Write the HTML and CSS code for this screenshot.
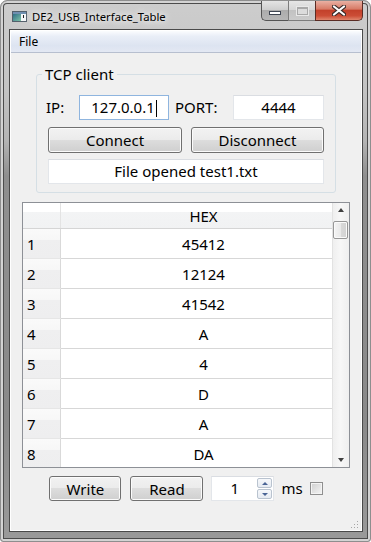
FILE: index.html
```html
<!DOCTYPE html>
<html lang="en">
<head>
  <meta charset="UTF-8" />
  <title>DE2_USB_Interface_Table</title>
  <link rel="stylesheet" href="styles.css">
</head>
<body>
  <div class="window">
    <header class="titlebar">
      <svg class="app-icon" width="15" height="11" viewBox="0 0 15 11">
        <defs>
          <linearGradient id="ig" x1="0" y1="0" x2="1" y2="1">
            <stop offset="0" stop-color="#2f6f86" />
            <stop offset="1" stop-color="#7fc3a8" />
          </linearGradient>
        </defs>
        <rect x="0.5" y="0.5" width="14" height="10" fill="#f4f6f8" stroke="#54606c" />
        <rect x="1" y="1" width="13" height="2" fill="#6f8fb0" />
        <rect x="1" y="3" width="8" height="7" fill="url(#ig)" />
        <rect x="11" y="4" width="1" height="3" fill="#222" />
      </svg>
      <span class="title">DE2_USB_Interface_Table</span>
      <div class="caption-btns">
        <span class="cap cap-min"><i></i></span>
        <span class="cap cap-max"><i></i></span>
        <span class="cap cap-close">
          <svg width="14" height="11" viewBox="0 0 14 11">
            <path d="M2 1.5 L12 9.5 M12 1.5 L2 9.5" stroke="#3a2a28" stroke-width="4.2" stroke-linecap="round" />
            <path d="M2 1.5 L12 9.5 M12 1.5 L2 9.5" stroke="#fff" stroke-width="2.2" stroke-linecap="round" />
          </svg>
        </span>
      </div>
    </header>

    <div class="client">
      <div class="menubar"><span>File</span></div>

      <main class="main">
        <fieldset class="group">
          <legend>TCP client</legend>
          <div class="row">
            <label class="lbl lbl-ip">IP:</label>
            <div class="field field-ip">127.0.0.1<span class="caret"></span></div>
            <label class="lbl lbl-port">PORT:</label>
            <div class="field field-port">4444</div>
          </div>
          <div class="row btn-row">
            <button class="btn btn-connect">Connect</button>
            <button class="btn btn-disconnect">Disconnect</button>
          </div>
          <div class="field status">File opened test1.txt</div>
        </fieldset>

        <div class="table">
          <div class="grid">
            <div class="hrow">
              <div class="corner"></div>
              <div class="hcell">HEX</div>
            </div>
            <div class="trow"><div class="vhead">1</div><div class="cell">45412</div></div>
            <div class="trow"><div class="vhead">2</div><div class="cell">12124</div></div>
            <div class="trow"><div class="vhead">3</div><div class="cell">41542</div></div>
            <div class="trow"><div class="vhead">4</div><div class="cell">A</div></div>
            <div class="trow"><div class="vhead">5</div><div class="cell">4</div></div>
            <div class="trow"><div class="vhead">6</div><div class="cell">D</div></div>
            <div class="trow"><div class="vhead">7</div><div class="cell">A</div></div>
            <div class="trow"><div class="vhead">8</div><div class="cell">DA</div></div>
          </div>
          <div class="vscroll">
            <div class="sb-btn"><span class="arrow-up"></span></div>
            <div class="sb-thumb"></div>
            <div class="sb-track"></div>
            <div class="sb-btn"><span class="arrow-down"></span></div>
          </div>
        </div>

        <div class="controls">
          <button class="btn btn-write">Write</button>
          <button class="btn btn-read">Read</button>
          <div class="spin">
            <span class="spin-value">1</span>
            <div class="spin-btns">
              <span class="spin-up"><i></i></span>
              <span class="spin-down"><i></i></span>
            </div>
          </div>
          <span class="ms">ms</span>
          <span class="check"></span>
        </div>

        <div class="grip">
          <svg width="9" height="9" viewBox="0 0 9 9">
            <g fill="#a7a7a7">
              <rect x="7" y="1" width="1" height="1" />
              <rect x="4" y="4" width="1" height="1" />
              <rect x="7" y="4" width="1" height="1" />
              <rect x="1" y="7" width="1" height="1" />
              <rect x="4" y="7" width="1" height="1" />
              <rect x="7" y="7" width="1" height="1" />
            </g>
          </svg>
        </div>
      </main>
    </div>
  </div>
</body>
</html>
```

FILE: styles.css
```css
* {
  box-sizing: border-box;
}
body {
  margin: 0;
  background: #fff;
  color: #000;
  font-family: "Segoe UI", "Noto Sans", sans-serif;
  font-size: 15px;
}

/* window frame */
.window {
  width: 371px;
  height: 542px;
  display: flex;
  flex-direction: column;
  padding: 0 7px 9px 8px;
  border: 1px solid #8e8e8e;
  border-radius: 7px 7px 3px 3px;
  background: linear-gradient(180deg, #cdcdcd 0, #c3c3c3 90px, #b4b4b4 140px, #8f8f8f 175px, #8a8a8a 420px, #9a9a9a 100%);
  box-shadow: inset 0 0 0 2px #d3d3d3, inset 0 0 0 3px #4c4c4c;
}
.titlebar {
  height: 28px;
  display: flex;
  align-items: flex-start;
}
.app-icon {
  margin: 10px 0 0 3px;
}
.title {
  margin: 9px 0 0 5px;
  font-size: 11.3px;
  line-height: 14px;
  text-shadow: 0 0 6px #fff, 0 0 10px #fff;
}
.caption-btns {
  display: flex;
  margin-left: auto;
  height: 20px;
}
.cap {
  height: 20px;
  display: flex;
  align-items: center;
  justify-content: center;
  border: 1px solid #545454;
  border-top: none;
}
.cap-min {
  width: 27px;
  border-right: none;
  border-radius: 0 0 0 5px;
  background: linear-gradient(180deg, #e4e4e4 0, #cfcfcf 45%, #acacac 50%, #b6b6b6 100%);
}
.cap-min i {
  display: block;
  width: 12px;
  height: 4px;
  margin-top: 5px;
  background: #fff;
  border: 1px solid #3d4450;
}
.cap-max {
  width: 27px;
  border-color: #7c7c7c;
  border-right: none;
  background: linear-gradient(180deg, #e6e6e6 0, #d7d7d7 45%, #c2c2c2 50%, #cbcbcb 100%);
}
.cap-max i {
  display: block;
  width: 11px;
  height: 8px;
  border: 1px solid #a9a9a9;
  border-top-width: 2px;
  background: #dcdcdc;
  box-shadow: 0 0 0 1px #e9e9e9;
}
.cap-close {
  width: 48px;
  border-radius: 0 0 5px 0;
  border-color: #5a2c24;
  background: linear-gradient(180deg, #e9b0a3 0, #d77b67 42%, #c3412b 50%, #cc4d36 78%, #e0866d 100%);
}

/* client area */
.client {
  flex: 1;
  display: flex;
  flex-direction: column;
  border: 1px solid #4a4a4a;
  padding: 1px;
  background: #fff;
  min-height: 0;
}
.menubar {
  height: 22px;
  padding-left: 8px;
  font-size: 12px;
  line-height: 21px;
  border-bottom: 1px solid #b7bfcf;
  background: linear-gradient(180deg, #fbfcfe 0, #e9eef7 25%, #dde4f1 70%, #e3e8f3 100%);
}
.main {
  flex: 1;
  display: flex;
  flex-direction: column;
  align-items: flex-start;
  background: #f0f0f0;
}

/* group box */
.group {
  width: 300px;
  margin: 12px 0 0 25px;
  padding: 12px 11px 8px 11px;
  border: 1px solid #d5dfe5;
  border-radius: 3px;
}
.group legend {
  padding: 0 3px;
  margin-left: -6px;
  line-height: 18px;
}
.row {
  display: flex;
  align-items: center;
  height: 25px;
}
.lbl {
  line-height: 25px;
}
.lbl-ip {
  width: 33px;
  margin-left: -2px;
}
.lbl-port {
  width: 58px;
  margin-left: 6px;
}
.field {
  height: 25px;
  background: #fff;
  border: 1px solid #e3e6ea;
  border-top-color: #dadde2;
  text-align: center;
  line-height: 23px;
}
.field-ip {
  width: 90px;
  border-color: #8fb5df;
}
.caret {
  display: inline-block;
  width: 1px;
  height: 17px;
  margin-left: 1px;
  vertical-align: -4px;
  background: #000;
}
.field-port {
  width: 91px;
}
.btn-row {
  margin-top: 7px;
  height: 26px;
  gap: 9px;
}
.btn {
  font-family: inherit;
  font-size: 15px;
  color: #000;
  height: 100%;
  padding: 0;
  border: 1px solid #707070;
  border-radius: 3px;
  background: linear-gradient(180deg, #f2f2f2 0, #ebebeb 50%, #dddddd 50%, #cfcfcf 100%);
  box-shadow: inset 0 0 0 1px #fbfbfb;
  line-height: 22px;
}
.btn-connect {
  width: 134px;
}
.btn-disconnect {
  width: 133px;
}
.status {
  width: 276px;
  margin-top: 6px;
}

/* table view */
.table {
  width: 328px;
  height: 266px;
  margin: 9px 0 0 11px;
  border: 1px solid #8d9096;
  background: #fff;
  display: flex;
  overflow: hidden;
}
.grid {
  flex: 1;
  overflow: hidden;
}
.hrow {
  display: flex;
  height: 26px;
  border-bottom: 1px solid #d5d5d5;
  background: linear-gradient(180deg, #fff 0, #fff 36%, #f3f4f5 36%, #f1f2f3 100%);
}
.corner {
  width: 38px;
  border-right: 1px solid #e3e3e3;
}
.hcell {
  flex: 1;
  text-align: center;
  padding: 1px 0 0 14px;
  line-height: 24px;
}
.trow {
  display: flex;
  height: 30px;
}
.vhead {
  width: 38px;
  padding: 2px 0 0 4px;
  line-height: 27px;
  border-right: 1px solid #d9d9d9;
  border-bottom: 1px solid #e6e6e6;
  background: linear-gradient(180deg, #fafafa 0, #f7f7f7 38%, #efeff0 38%, #eeeeef 100%);
}
.cell {
  flex: 1;
  text-align: center;
  padding: 2px 0 0 14px;
  line-height: 27px;
  border-bottom: 1px solid #d7d7d7;
}
.vscroll {
  width: 17px;
  display: flex;
  flex-direction: column;
  background: linear-gradient(90deg, #e2e2e2 0, #e2e2e2 1px, #efefef 1px, #f7f7f7 50%, #efefef 100%);
}
.sb-btn {
  height: 17px;
  display: flex;
  align-items: center;
  justify-content: center;
}
.arrow-up,
.arrow-down {
  width: 0;
  height: 0;
  border-left: 3.5px solid transparent;
  border-right: 3.5px solid transparent;
}
.arrow-up {
  border-bottom: 4px solid #404040;
  margin-top: -4px;
}
.arrow-down {
  border-top: 4px solid #404040;
  margin-top: 2px;
}
.sb-thumb {
  height: 18px;
  margin: 1px 1px 0 1px;
  border: 1px solid #979797;
  border-radius: 2px;
  background: linear-gradient(90deg, #f4f4f4 0, #e9e9e9 50%, #d9d9d9 51%, #d2d2d2 100%);
  box-shadow: inset 0 0 0 1px #fafafa;
}
.sb-track {
  flex: 1;
}

/* bottom controls */
.controls {
  align-self: center;
  display: flex;
  align-items: center;
  height: 25px;
  margin-top: 8px;
}
.btn-write {
  width: 72px;
}
.btn-read {
  width: 73px;
  margin-left: 9px;
}
.spin {
  width: 63px;
  height: 25px;
  margin-left: 8px;
  display: flex;
  align-items: center;
  background: #fff;
  border: 1px solid #e3e6ea;
  border-top-color: #dadde2;
}
.spin-value {
  flex: 1;
  text-align: center;
  line-height: 23px;
}
.spin-btns {
  width: 15px;
  margin-right: 1px;
  display: flex;
  flex-direction: column;
  gap: 1px;
}
.spin-btns span {
  height: 10px;
  display: flex;
  align-items: center;
  justify-content: center;
  border: 1px solid #b9c3cf;
  border-radius: 2px;
  background: linear-gradient(180deg, #f6f8fb 0, #e6ebf2 100%);
}
.spin-btns i {
  width: 0;
  height: 0;
  border-left: 3px solid transparent;
  border-right: 3px solid transparent;
}
.spin-up i {
  border-bottom: 3px solid #4a6596;
}
.spin-down i {
  border-top: 3px solid #4a6596;
}
.ms {
  margin-left: 7px;
  line-height: 25px;
}
.check {
  width: 13px;
  height: 13px;
  margin-left: 7px;
  border: 1px solid #8f8f8f;
  background: linear-gradient(135deg, #cfcfcf 0, #e6e6e6 60%, #f5f5f5 100%);
  box-shadow: inset 0 0 0 1px #f4f4f4;
}
.grip {
  margin: auto 2px 1px 0;
  align-self: flex-end;
  height: 9px;
}
.grip svg {
  display: block;
}
```
